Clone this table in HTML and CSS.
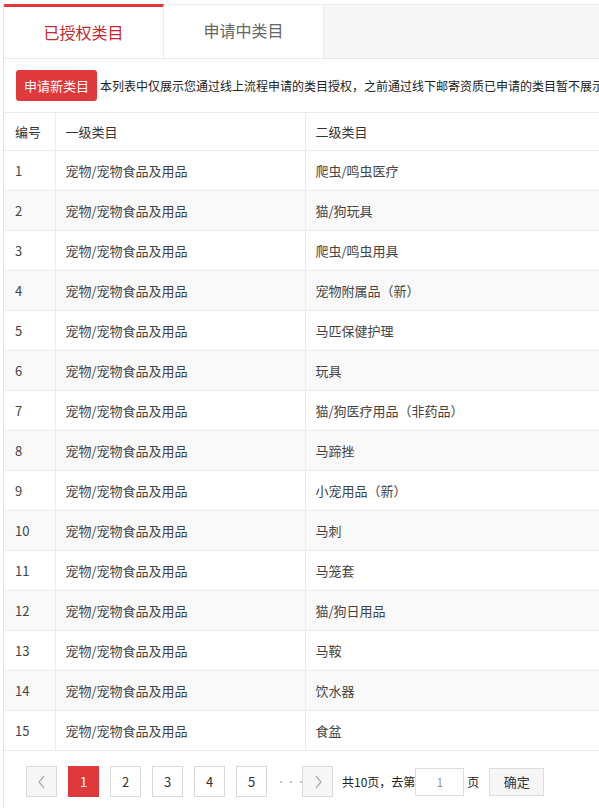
FILE: index.html
```html
<!DOCTYPE html>
<html lang="zh-CN">
<head>
<meta charset="utf-8">
<link rel="stylesheet" href="styles.css">
</head>
<body>
<div class="wrap">
  <div class="tabs">
    <div class="tab active">已授权类目</div>
    <div class="tab">申请中类目</div>
    <div class="tab-fill"></div>
  </div>
  <div class="toolbar">
    <button class="btn-red">申请新类目</button>
    <span class="notice">本列表中仅展示您通过线上流程申请的类目授权，之前通过线下邮寄资质已申请的类目暂不展示</span>
  </div>
  <table class="grid">
    <colgroup><col class="c1"><col class="c2"><col class="c3"></colgroup>
    <thead><tr><th>编号</th><th>一级类目</th><th>二级类目</th></tr></thead>
    <tbody>
      <tr><td>1</td><td>宠物/宠物食品及用品</td><td>爬虫/鸣虫医疗</td></tr>
      <tr><td>2</td><td>宠物/宠物食品及用品</td><td>猫/狗玩具</td></tr>
      <tr><td>3</td><td>宠物/宠物食品及用品</td><td>爬虫/鸣虫用具</td></tr>
      <tr><td>4</td><td>宠物/宠物食品及用品</td><td>宠物附属品（新）</td></tr>
      <tr><td>5</td><td>宠物/宠物食品及用品</td><td>马匹保健护理</td></tr>
      <tr><td>6</td><td>宠物/宠物食品及用品</td><td>玩具</td></tr>
      <tr><td>7</td><td>宠物/宠物食品及用品</td><td>猫/狗医疗用品（非药品）</td></tr>
      <tr><td>8</td><td>宠物/宠物食品及用品</td><td>马蹄挫</td></tr>
      <tr><td>9</td><td>宠物/宠物食品及用品</td><td>小宠用品（新）</td></tr>
      <tr><td>10</td><td>宠物/宠物食品及用品</td><td>马刺</td></tr>
      <tr><td>11</td><td>宠物/宠物食品及用品</td><td>马笼套</td></tr>
      <tr><td>12</td><td>宠物/宠物食品及用品</td><td>猫/狗日用品</td></tr>
      <tr><td>13</td><td>宠物/宠物食品及用品</td><td>马鞍</td></tr>
      <tr><td>14</td><td>宠物/宠物食品及用品</td><td>饮水器</td></tr>
      <tr><td>15</td><td>宠物/宠物食品及用品</td><td>食盆</td></tr>
    </tbody>
  </table>
  <div class="pager">
    <span class="pg pg-nav"><svg width="10" height="14" viewBox="0 0 10 14"><path d="M7 1 L2 7 L7 13" fill="none" stroke="#aaa" stroke-width="1.2"/></svg></span>
    <span class="pg pg-on">1</span>
    <span class="pg">2</span>
    <span class="pg">3</span>
    <span class="pg">4</span>
    <span class="pg">5</span>
    <span class="pg-dots">···</span>
    <span class="pg pg-nav"><svg width="10" height="14" viewBox="0 0 10 14"><path d="M3 1 L8 7 L3 13" fill="none" stroke="#aaa" stroke-width="1.2"/></svg></span>
    <span class="pg-text">共10页，去第</span>
    <input class="pg-input" type="text" value="1">
    <span class="pg-text pg-unit">页</span>
    <button class="pg-go">确定</button>
  </div>
</div>
</body>
</html>
```

FILE: styles.css
```css
html, body {
  margin: 0;
  padding: 0;
  overflow: hidden;
  background: #fff;
}
body {
  font-family: "Noto Sans CJK SC", "Microsoft YaHei", sans-serif;
  color: #333;
  width: 599px;
  height: 808px;
}
.wrap {
  margin: 4px 0 0 3px;
  width: 900px;
  border-left: 1px solid #e3e3e3;
  min-height: 900px;
}
.tabs {
  display: flex;
  height: 55px;
  border-bottom: 1px solid #e8e8e8;
  box-sizing: border-box;
}
.tab {
  width: 160px;
  box-sizing: border-box;
  border-top: 1px solid #ececec;
  border-right: 1px solid #ececec;
  display: flex;
  align-items: center;
  justify-content: center;
  font-size: 16px;
  color: #666;
  background: #fff;
  padding-bottom: 4px;
}
.tab.active {
  border-top: 3px solid #e0393c;
  color: #c5282b;
  padding-bottom: 2px;
}
.tab-fill {
  flex: 1;
  background: #f7f7f7;
  border-top: 1px solid #ececec;
}
.toolbar {
  display: flex;
  align-items: center;
  padding: 11px 0 11px 12px;
  white-space: nowrap;
}
.btn-red {
  height: 31px;
  padding: 0 8px;
  border: 0;
  border-radius: 3px;
  background: #e0393c;
  color: #fff;
  font-family: inherit;
  font-size: 13px;
  line-height: 31px;
}
.notice {
  margin-left: 3px;
  font-size: 12px;
  color: #222;
}
.grid {
  border-collapse: collapse;
  width: 100%;
  table-layout: fixed;
  font-size: 13px;
}
.c1 { width: 51px; }
.c2 { width: 250px; }
.grid th, .grid td {
  text-align: left;
  font-weight: normal;
  padding: 0 0 0 10px;
  border-top: 1px solid #ececec;
  border-left: 1px solid #ececec;
  height: 39px;
  color: #444;
}
.grid th {
  height: 37px;
  color: #333;
}
.grid th:first-child, .grid td:first-child {
  border-left: 0;
  padding-left: 11px;
}
.grid tbody tr:nth-child(even) td {
  background: #f9f9f9;
}
.grid tbody tr:last-child td {
  border-bottom: 1px solid #ececec;
}
.pager {
  display: flex;
  align-items: center;
  padding: 15px 0 0 22px;
  font-size: 13px;
}
.pg {
  width: 31px;
  height: 31px;
  box-sizing: border-box;
  border: 1px solid #d9d9d9;
  background: #fff;
  display: flex;
  align-items: center;
  justify-content: center;
  margin-right: 11px;
  color: #333;
}
.pg-nav {
  background: #f6f6f6;
}
.pg-on {
  background: #e0393c;
  border-color: #e0393c;
  color: #fff;
}
.pg-dots {
  width: 26px;
  color: #bbb;
  font-size: 10px;
  text-align: left;
  margin-left: -2px;
}
.pg-text {
  font-size: 12px;
  color: #222;
  margin-left: -2px;
}
.pg-input {
  width: 49px;
  height: 28px;
  box-sizing: border-box;
  border: 1px solid #ddd;
  margin: 0 3px 0 0;
  padding: 0;
  text-align: center;
  font-family: inherit;
  font-size: 12px;
  color: #999;
}
.pg-unit {
  margin-left: 0;
}
.pg-go {
  margin-left: 10px;
  width: 55px;
  height: 28px;
  box-sizing: border-box;
  border: 1px solid #ddd;
  background: #f6f6f6;
  font-family: inherit;
  font-size: 13px;
  color: #333;
  padding: 0;
}
```
